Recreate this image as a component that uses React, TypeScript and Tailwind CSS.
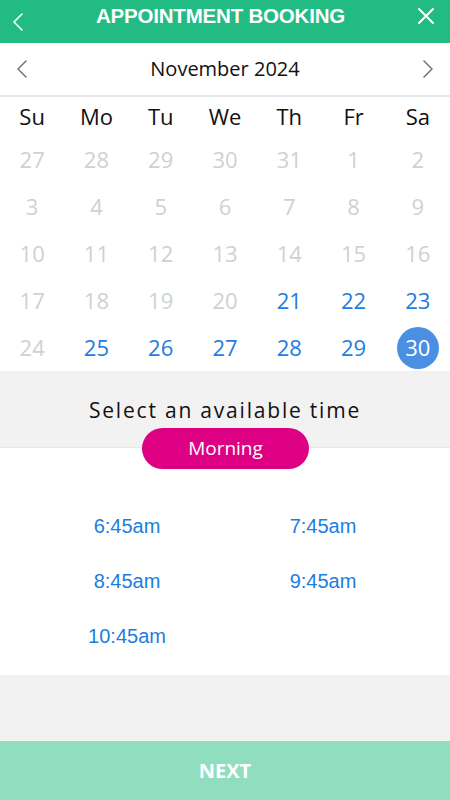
import React from 'react';

const WEEKDAYS = ['Su', 'Mo', 'Tu', 'We', 'Th', 'Fr', 'Sa'];

type Day = { n: number; on: boolean; sel?: boolean };

const ROWS: Day[][] = [
  [27, 28, 29, 30, 31, 1, 2].map((n) => ({ n, on: false })),
  [3, 4, 5, 6, 7, 8, 9].map((n) => ({ n, on: false })),
  [10, 11, 12, 13, 14, 15, 16].map((n) => ({ n, on: false })),
  [17, 18, 19, 20, 21, 22, 23].map((n) => ({ n, on: n >= 21 })),
  [24, 25, 26, 27, 28, 29, 30].map((n) => ({ n, on: n >= 25, sel: n === 30 })),
];

const TIMES = ['6:45am', '7:45am', '8:45am', '9:45am', '10:45am'];

const open = { fontFamily: '"Open Sans", "Noto Sans", sans-serif' };
const arial = { fontFamily: '"Liberation Sans", Arial, sans-serif' };

function Chevron({ dir, className }: { dir: 'left' | 'right'; className: string }) {
  return (
    <svg viewBox="0 0 10 18" className={className} fill="none" stroke="currentColor" strokeWidth="1.6" strokeLinecap="round" strokeLinejoin="round">
      {dir === 'left' ? <path d="M9 1 1 9l8 8" /> : <path d="M1 1l8 8-8 8" />}
    </svg>
  );
}

export default function App() {
  return (
    <div className="flex flex-col h-[800px] w-[450px] overflow-hidden bg-[#f2f2f2]">
      <header className="h-[43px] flex-shrink-0 bg-[#22bb84] flex items-center justify-between px-[13px]">
        <Chevron dir="left" className="w-[10px] h-[18px] text-white" />
        <h1 className="text-white font-bold text-[20.5px] tracking-[-0.2px] -mt-[11px]" style={arial}>
          APPOINTMENT BOOKING
        </h1>
        <svg viewBox="0 0 16 16" className="w-[16px] h-[16px] -mt-[12px] mr-[3px] text-white" fill="none" stroke="currentColor" strokeWidth="2" strokeLinecap="round">
          <path d="M1 1l14 14M15 1 1 15" />
        </svg>
      </header>

      <div className="bg-white h-[54px] flex-shrink-0 flex items-center justify-between px-[17px] border-b-2 border-[#e6e9ec]">
        <Chevron dir="left" className="w-[10px] h-[18px] text-[#6f7a83]" />
        <span className="text-[20px] text-[#111]" style={open}>November 2024</span>
        <Chevron dir="right" className="w-[10px] h-[18px] text-[#6f7a83]" />
      </div>

      <div className="bg-white" style={open}>
        <div className="grid grid-cols-7 h-[39px] items-center">
          {WEEKDAYS.map((d) => (
            <span key={d} className="text-center text-[22px] text-[#111]">{d}</span>
          ))}
        </div>
        {ROWS.map((row, i) => (
          <div key={i} className="grid grid-cols-7 h-[47px] items-center">
            {row.map((d) => (
              <div key={d.n} className="flex justify-center">
                {d.sel ? (
                  <span className="w-[42px] h-[42px] rounded-full bg-[#4a8fe2] text-white text-[22px] flex items-center justify-center">
                    {d.n}
                  </span>
                ) : (
                  <span className={`text-[22px] ${d.on ? 'text-[#1d7de0]' : 'text-[#ccd2d6]'}`}>{d.n}</span>
                )}
              </div>
            ))}
          </div>
        ))}
      </div>

      <div className="relative bg-[#f2f2f2] h-[77px] flex-shrink-0 border-b border-[#e3e7ea] flex justify-center pt-[29px]" style={open}>
        <span className="text-[21px] text-[#111] tracking-[1.8px] leading-none">Select an available time</span>
        <span className="absolute left-[142px] top-[57px] w-[167px] h-[41px] rounded-full bg-[#dd0083] text-white text-[19px] flex items-center justify-center">
          Morning
        </span>
      </div>

      <div className="bg-white h-[227px] flex-shrink-0 pt-[67px]" style={arial}>
        <div className="grid grid-cols-2 gap-y-[33px] px-[29px]">
          {TIMES.map((t) => (
            <span key={t} className="text-center text-[20px] leading-[22px] text-[#1d7de0]">{t}</span>
          ))}
        </div>
      </div>

      <div className="flex-1" />

      <button className="h-[59px] flex-shrink-0 bg-[#90ddbf] text-white font-bold text-[20px]" style={open}>
        NEXT
      </button>
    </div>
  );
}
